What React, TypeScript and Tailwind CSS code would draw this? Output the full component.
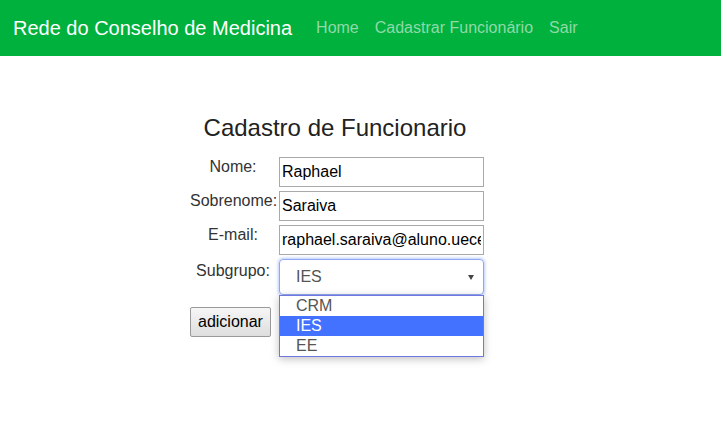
import { useState } from "react";

const font = { fontFamily: '"Liberation Sans", Arial, sans-serif' };

const options = ["CRM", "IES", "EE"];

export default function App() {
  const [selected] = useState("IES");

  return (
    <div className="min-h-[435px] w-full bg-white text-[#333]" style={font}>
      <nav className="flex h-14 items-center bg-[#00b13e] px-[13px]">
        <span className="text-[20px] text-white">Rede do Conselho de Medicina</span>
        <div className="ml-4 flex items-center text-[16px] text-[#8fdaa8]">
          <a className="px-2">Home</a>
          <a className="px-2">Cadastrar Funcionário</a>
          <a className="px-2">Sair</a>
        </div>
      </nav>

      <div className="ml-[190px] mt-[59px] w-[294px]">
        <h2 className="pr-[4px] text-center text-[24px] leading-[26px] text-[#222]">Cadastro de Funcionario</h2>

        <div className="mt-[16px] grid grid-cols-[86px_205px] gap-x-[3px] gap-y-[4px] text-[16px]">
          <label className="pt-[1px] text-center leading-[18px]">Nome:</label>
          <input
            readOnly
            value="Raphael"
            className="h-[30px] border border-[#a9a9a9] px-[2px] text-[16px] text-black outline-none"
          />
          <label className="pt-[1px] text-center leading-[18px]">Sobrenome:</label>
          <input
            readOnly
            value="Saraiva"
            className="h-[30px] border border-[#a9a9a9] px-[2px] text-[16px] text-black outline-none"
          />
          <label className="pt-[1px] text-center leading-[18px]">E-mail:</label>
          <input
            readOnly
            value="raphael.saraiva@aluno.uece.br"
            className="h-[30px] border border-[#a9a9a9] px-[2px] text-[16px] text-black outline-none"
          />
          <label className="pt-[3px] text-center leading-[18px]">Subgrupo:</label>
          <div className="relative">
            <div className="flex h-[36px] items-center justify-between rounded-[4px] border border-[#8fa8f0] pl-4 pr-2 text-[#555] shadow-[0_0_3px_1px_rgba(102,140,240,0.45)]">
              <span>{selected}</span>
              <svg width="6" height="5" viewBox="0 0 6 5" className="mr-[1px]">
                <path d="M0 0h6L3 5z" fill="#444" />
              </svg>
            </div>
            <ul className="absolute left-0 top-[36px] z-10 w-[205px] border border-[#7078e0] bg-white text-[16px] leading-[20px] text-[#555] shadow-[0_2px_8px_rgba(0,0,0,0.25)]">
              {options.map((o) => (
                <li
                  key={o}
                  className={o === selected ? "bg-[#4272ff] pl-4 text-white" : "pl-4"}
                >
                  {o}
                </li>
              ))}
            </ul>
          </div>
        </div>

        <button className="mt-[12px] h-[30px] rounded-[2px] border border-[#9a9a9a] bg-gradient-to-b from-[#f6f6f6] to-[#dedede] px-[7px] text-[16px] text-black">
          adicionar
        </button>
      </div>
    </div>
  );
}
